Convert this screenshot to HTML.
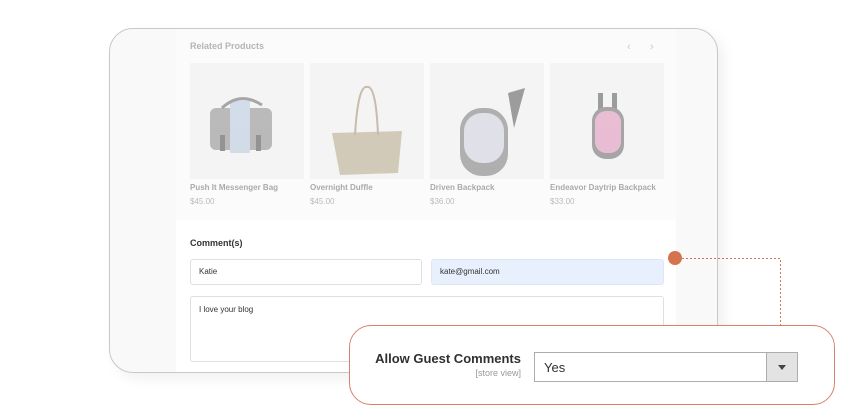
<!DOCTYPE html>
<html><head><meta charset="utf-8"><style>
body{margin:0;width:850px;height:420px;background:#fff;position:relative;overflow:hidden;font-family:"Liberation Sans",sans-serif}
.frame{position:absolute;left:109px;top:28px;width:607px;height:343px;border:1px solid #c8c8c8;border-radius:24px;background:#f9f9f9;box-shadow:6px 6px 14px rgba(0,0,0,.06);overflow:hidden}
.panel{position:absolute;left:66px;top:0;width:500px;height:343px;background:#fbfbfb}
.comm{position:absolute;left:66px;top:191px;width:500px;height:160px;background:#fff}
.a{position:absolute}
.rp{left:80px;top:12px;font-size:9px;color:#b5b5b5;font-weight:bold}
.img{top:34px;width:114px;height:116px;background:#f4f4f4}
.img svg{opacity:.55}
.nm{top:154px;font-size:8px;color:#aaa;font-weight:bold}
.pr{top:168px;font-size:8px;color:#bbb}
.inp{border:1px solid #e0e0e0;border-radius:3px;background:#fff;font-size:8px;color:#333;box-sizing:border-box;padding:0 8px}
</style></head><body>
<div class="frame">
 <div class="panel"></div>
 <div class="comm"></div>
 <div class="a rp">Related Products</div>
 <div class="a" style="left:517px;top:12px;font-size:11px;color:#ccc">‹</div>
 <div class="a" style="left:540px;top:12px;font-size:11px;color:#ccc">›</div>
 <div class="a img" style="left:80px"><svg width="114" height="116"><rect x="20" y="45" width="62" height="42" rx="6" fill="#8a8a8a"/><rect x="40" y="38" width="20" height="52" fill="#b8c8e0"/><path d="M32 45 Q50 28 72 42" stroke="#666" stroke-width="3" fill="none"/><rect x="30" y="72" width="5" height="16" fill="#444"/><rect x="66" y="72" width="5" height="16" fill="#444"/></svg></div>
 <div class="a img" style="left:200px"><svg width="114" height="116"><path d="M22 70 L92 68 L88 110 L30 112Z" fill="#b8a888"/><path d="M45 72 Q48 22 57 24 Q66 22 68 72" stroke="#a09070" stroke-width="2" fill="none"/></svg></div>
 <div class="a img" style="left:320px"><svg width="114" height="116"><path d="M78 30 L95 25 L84 65 Z" fill="#555"/><rect x="30" y="45" width="48" height="68" rx="22" fill="#777"/><rect x="34" y="50" width="40" height="50" rx="18" fill="#d0d0e0"/></svg></div>
 <div class="a img" style="left:440px"><svg width="114" height="116"><rect x="48" y="30" width="5" height="18" fill="#555"/><rect x="62" y="30" width="5" height="18" fill="#555"/><rect x="42" y="44" width="32" height="52" rx="14" fill="#666"/><rect x="45" y="48" width="26" height="42" rx="11" fill="#e090b8"/></svg></div>
 <div class="a nm" style="left:80px">Push It Messenger Bag</div><div class="a pr" style="left:80px">$45.00</div>
 <div class="a nm" style="left:200px">Overnight Duffle</div><div class="a pr" style="left:200px">$45.00</div>
 <div class="a nm" style="left:320px">Driven Backpack</div><div class="a pr" style="left:320px">$36.00</div>
 <div class="a nm" style="left:440px">Endeavor Daytrip Backpack</div><div class="a pr" style="left:440px">$33.00</div>
 <div class="a" style="left:80px;top:209px;font-size:9px;font-weight:bold;color:#333">Comment(s)</div>
 <div class="a inp" style="left:80px;top:230px;width:232px;height:26px;line-height:24px">Katie</div>
 <div class="a inp" style="left:321px;top:230px;width:233px;height:26px;line-height:24px;background:#e8f0fe;border-color:#dde6f5">kate@gmail.com</div>
 <div class="a inp" style="left:80px;top:267px;width:474px;height:66px;padding-top:8px">I love your blog</div>
</div>
<svg class="a" style="left:0;top:0" width="850" height="420"><path d="M682 258.5 H780.5 V326" stroke="#d4744f" stroke-width="1" stroke-dasharray="2,2" fill="none"/><circle cx="675" cy="258" r="7" fill="#d4744f"/></svg>
<div class="a" style="left:349px;top:325px;width:486px;height:80px;border:1px solid #d9826a;border-radius:22px;background:#fff;box-sizing:border-box"></div>
<div class="a" style="left:360px;top:351px;width:161px;text-align:right;font-size:13px;font-weight:bold;color:#303030">Allow Guest Comments</div>
<div class="a" style="left:400px;top:368px;width:121px;text-align:right;font-size:9px;color:#999">[store view]</div>
<div class="a" style="left:534px;top:352px;width:264px;height:30px;border:1px solid #adadad;box-sizing:border-box;background:#fff"><span style="position:absolute;left:9px;top:7px;font-size:13px;color:#303030">Yes</span><div style="position:absolute;right:0;top:0;width:30px;height:28px;background:#e3e3e3;border-left:1px solid #adadad"><div style="position:absolute;left:11px;top:12px;border-left:4px solid transparent;border-right:4px solid transparent;border-top:5px solid #444"></div></div></div>
</body></html>
